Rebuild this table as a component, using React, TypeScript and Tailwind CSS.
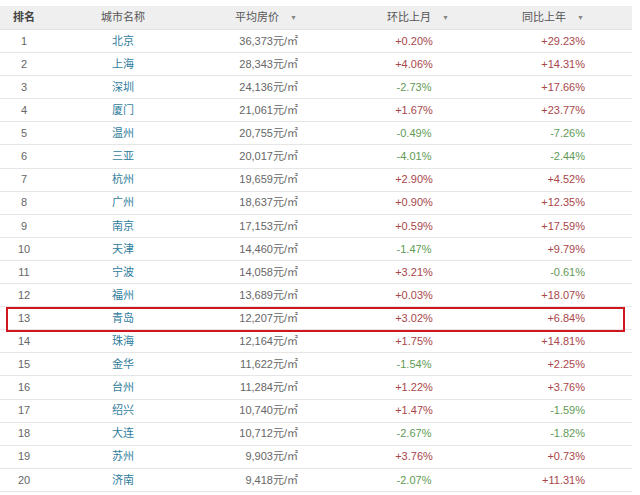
import React from 'react';

type Row = { rank: number; city: string; price: string; mom: string; yoy: string };

const rows: Row[] = [
  { rank: 1, city: '北京', price: '36,373', mom: '+0.20%', yoy: '+29.23%' },
  { rank: 2, city: '上海', price: '28,343', mom: '+4.06%', yoy: '+14.31%' },
  { rank: 3, city: '深圳', price: '24,136', mom: '-2.73%', yoy: '+17.66%' },
  { rank: 4, city: '厦门', price: '21,061', mom: '+1.67%', yoy: '+23.77%' },
  { rank: 5, city: '温州', price: '20,755', mom: '-0.49%', yoy: '-7.26%' },
  { rank: 6, city: '三亚', price: '20,017', mom: '-4.01%', yoy: '-2.44%' },
  { rank: 7, city: '杭州', price: '19,659', mom: '+2.90%', yoy: '+4.52%' },
  { rank: 8, city: '广州', price: '18,637', mom: '+0.90%', yoy: '+12.35%' },
  { rank: 9, city: '南京', price: '17,153', mom: '+0.59%', yoy: '+17.59%' },
  { rank: 10, city: '天津', price: '14,460', mom: '-1.47%', yoy: '+9.79%' },
  { rank: 11, city: '宁波', price: '14,058', mom: '+3.21%', yoy: '-0.61%' },
  { rank: 12, city: '福州', price: '13,689', mom: '+0.03%', yoy: '+18.07%' },
  { rank: 13, city: '青岛', price: '12,207', mom: '+3.02%', yoy: '+6.84%' },
  { rank: 14, city: '珠海', price: '12,164', mom: '+1.75%', yoy: '+14.81%' },
  { rank: 15, city: '金华', price: '11,622', mom: '-1.54%', yoy: '+2.25%' },
  { rank: 16, city: '台州', price: '11,284', mom: '+1.22%', yoy: '+3.76%' },
  { rank: 17, city: '绍兴', price: '10,740', mom: '+1.47%', yoy: '-1.59%' },
  { rank: 18, city: '大连', price: '10,712', mom: '-2.67%', yoy: '-1.82%' },
  { rank: 19, city: '苏州', price: '9,903', mom: '+3.76%', yoy: '+0.73%' },
  { rank: 20, city: '济南', price: '9,418', mom: '-2.07%', yoy: '+11.31%' },
];

const tone = (v: string) => (v.startsWith('-') ? 'text-[#5f9a55]' : 'text-[#a8474a]');

const Caret = () => <span className="ml-[11px] text-[7px] text-[#888] leading-none">▼</span>;

export default function App() {
  return (
    <div
      className="w-[640px] h-[495px] bg-white pt-[6px] overflow-hidden text-[11px] text-[#666]"
      style={{ fontFamily: '"Liberation Sans", "Noto Sans CJK SC", sans-serif' }}
    >
      <div className="w-[632px]">
        <div className="flex items-center h-[24px] bg-[#efefef] border-b border-[#e2e2e2] text-[#555]">
          <div className="w-[48px] text-center font-bold text-[#444]">排名</div>
          <div className="w-[150px] text-center">城市名称</div>
          <div className="w-[100px] flex items-center justify-end pr-[1px]">
            平均房价<Caret />
          </div>
          <div className="w-[232px] flex items-center justify-center pl-[8px]">
            环比上月<Caret />
          </div>
          <div className="w-[55px] flex items-center justify-end whitespace-nowrap pr-[1px]">
            同比上年<Caret />
          </div>
        </div>
        {rows.map((r) => (
          <div key={r.rank} className="relative flex items-center h-[23.1px] border-b border-[#e6e6e6]">
            <div className="w-[48px] text-center">{r.rank}</div>
            <div className="w-[150px] text-center text-[#2f7d9c]">{r.city}</div>
            <div className="w-[100px] text-right text-[#666]">
              {r.price}元/㎡
            </div>
            <div className={`w-[232px] text-center ${tone(r.mom)}`}>{r.mom}</div>
            <div className={`w-[55px] text-right ${tone(r.yoy)}`}>{r.yoy}</div>
            {r.rank === 13 && (
              <div className="absolute left-[6px] right-[7px] top-0 bottom-[-3px] border-2 border-[#d0161f]" />
            )}
          </div>
        ))}
      </div>
    </div>
  );
}
